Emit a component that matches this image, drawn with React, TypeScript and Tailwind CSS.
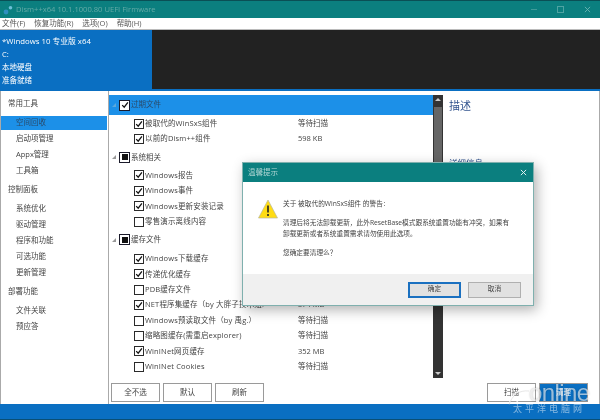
import React from 'react';

const font = { fontFamily: '"Open Sans", "Noto Sans CJK SC", sans-serif' };

const nav = [
  { title: '常用工具', items: ['空间回收', '启动项管理', 'Appx管理', '工具箱'] },
  { title: '控制面板', items: ['系统优化', '驱动管理', '程序和功能', '可选功能', '更新管理'] },
  { title: '部署功能', items: ['文件关联', '预应答'] },
];

const groups = [
  {
    name: '过期文件',
    state: 'on',
    active: true,
    pad: 'pt-[1px]',
    rows: [
      ['被取代的WinSxS组件', true, '等待扫描'],
      ['以前的Dism++组件', true, '598 KB'],
    ],
  },
  {
    name: '系统相关',
    state: 'mixed',
    pad: 'pt-[1px]',
    rows: [
      ['Windows报告', true, ''],
      ['Windows事件', true, ''],
      ['Windows更新安装记录', true, ''],
      ['零售演示离线内容', false, ''],
    ],
  },
  {
    name: '缓存文件',
    state: 'mixed',
    pad: 'pt-[2px]',
    rows: [
      ['Windows下载缓存', true, ''],
      ['传递优化缓存', true, ''],
      ['PDB缓存文件', false, ''],
      ['NET程序集缓存（by 大胖子技术组）', true, '374 MB'],
      ['Windows预读取文件（by 禹g.）', false, '等待扫描'],
      ['缩略图缓存(需重启explorer)', false, '等待扫描'],
      ['WinINet网页缓存', true, '352 MB'],
      ['WinINet Cookies', false, '等待扫描'],
    ],
  },
];

function Check({ state, group }: { state: string; group?: boolean }) {
  return (
    <span
      className={`shrink-0 bg-white flex items-center justify-center ${
        group ? 'w-[11px] h-[11px] border-[1.5px] border-[#1a1a2a]' : 'w-[10px] h-[10px] border-[1.5px] border-[#2a2a2a]'
      }`}
    >
      {state === 'on' && (
        <svg viewBox="0 0 10 10" className="w-[8px] h-[8px]">
          <path d="M1.5 5.2 L4 7.8 L8.6 1.8" fill="none" stroke="#111" strokeWidth="1.6" />
        </svg>
      )}
      {state === 'mixed' && <span className="w-[6px] h-[6px] bg-[#111]" />}
    </span>
  );
}

function Btn({ label, cls }: { label: string; cls?: string }) {
  return (
    <div className={`w-[49px] h-[19px] border border-[#9a9a9a] flex items-center justify-center ${cls ?? 'bg-white text-[#444]'}`}>
      {label}
    </div>
  );
}

export default function App() {
  return (
    <div
      className="relative w-[600px] h-[420px] overflow-hidden bg-white flex flex-col text-[7.5px] leading-none text-[#444] blur-[0.4px]"
      style={font}
    >
      {/* title bar */}
      <div className="h-[18px] bg-[#0b7f7f] border-t border-[#0a4f55] flex items-center pl-[3px] text-[#63aaa6] text-[7.6px] shrink-0">
        <svg viewBox="0 0 10 10" className="w-[10px] h-[10px] mr-[3px]">
          <circle cx="3" cy="7" r="2.4" fill="#2f8fc0" />
          <circle cx="7.5" cy="2.8" r="1.8" fill="#6cc0d8" />
        </svg>
        <span>Dism++x64 10.1.1000.80 UEFI Firmware</span>
        <div className="ml-auto flex items-center gap-[20px] pr-[9px]">
          <span className="w-[6px] h-px bg-[#3f9a99]" />
          <span className="w-[7px] h-[7px] border border-[#4ea3a2]" />
          <svg viewBox="0 0 8 8" className="w-[7px] h-[7px]">
            <path d="M1 1 L7 7 M7 1 L1 7" stroke="#6cb5b3" strokeWidth="1" />
          </svg>
        </div>
      </div>

      {/* menu */}
      <div className="h-[12px] flex items-center pl-[2px] gap-[9px] text-[#555] shrink-0 border-b border-[#bbb]">
        <span>文件(F)</span>
        <span>恢复功能(R)</span>
        <span>选项(O)</span>
        <span>帮助(H)</span>
      </div>

      {/* session header */}
      <div className="h-[61px] flex bg-[#222] border-b-2 border-[#0a6fc2] shrink-0">
        <div className="w-[152px] bg-[#0a6fc2] text-white flex flex-col justify-around pl-[2px] pt-[5px] pb-[2px]">
          <span className="text-[7.8px]">*Windows 10 专业版 x64</span>
          <span>C:</span>
          <span>本地硬盘</span>
          <span>准备就绪</span>
        </div>
      </div>

      {/* body */}
      <div className="flex-1 flex min-h-0 border-l border-r border-[#aaa]">
        <div className="w-[108px] shrink-0 border-r border-[#aaa] pt-[5px]">
          {nav.map((g) => (
            <div key={g.title} className="mb-[3px]">
              <div className="h-[16px] pl-[7px] flex items-center">{g.title}</div>
              <div className="pt-[3px]">
                {g.items.map((it) => (
                  <div key={it} className="h-[16px] flex items-center">
                    <div className={`h-[14px] flex-1 pl-[15px] flex items-center ${it === '空间回收' ? 'bg-[#1c90e8] mr-[1px] text-[#2a4a6a]' : ''}`}>
                      {it}
                    </div>
                  </div>
                ))}
              </div>
            </div>
          ))}
        </div>

        <div className="flex-1 flex flex-col min-w-0 pt-[4px]">
          <div className="flex h-[283px]">
            <div className="w-[324px] shrink-0">
              {groups.map((g, i) => (
                <div key={g.name} className={i === 0 ? '' : 'mt-[1px]'}>
                  <div className={`flex items-center pl-[3px] ${g.active ? 'h-[20px] bg-[#1c90e8] text-[#2a4a6a]' : 'h-[19px]'}`}>
                    <svg viewBox="0 0 4 4" className="w-[4px] h-[4px] mr-[3px] shrink-0">
                      <path d="M4 0 V4 H0 Z" fill={g.active ? '#5aa8dc' : '#999'} />
                    </svg>
                    <Check state={g.state} group />
                    <span className="ml-[1px]">{g.name}</span>
                  </div>
                  <div className={g.pad}>
                    {g.rows.map((r) => (
                      <div key={r[0] as string} className="h-[15.4px] flex items-center pl-[25px]">
                        <Check state={r[1] ? 'on' : 'off'} />
                        <span className="ml-[1px] tracking-[0.15px] w-[153px] whitespace-nowrap">{r[0]}</span>
                        <span>{r[2]}</span>
                      </div>
                    ))}
                  </div>
                </div>
              ))}
            </div>
            <div className="w-[10px] shrink-0 bg-[#333] flex flex-col items-center py-[3px]">
              <span className="w-0 h-0 border-x-[3px] border-x-transparent border-b-[3px] border-b-[#ccc]" />
              <span className="w-[8px] h-[100px] mt-[6px] bg-[#666]" />
              <span className="mt-auto w-0 h-0 border-x-[3px] border-x-transparent border-t-[3px] border-t-[#ccc]" />
            </div>
            <div className="flex-1 pl-[6px] pt-[5px]">
              <div className="text-[11px] text-[#33558f]">描述</div>
              <div className="mt-[48px] text-[8.5px] text-[#33558f]">详细信息</div>
            </div>
          </div>
          <div className="flex items-center pl-[2px] pr-[11px] pt-[5px] gap-[3px]">
            <Btn label="全不选" />
            <Btn label="默认" />
            <Btn label="刷新" />
            <div className="ml-auto flex gap-[3px]">
              <Btn label="扫描" />
              <Btn label="清理" cls="bg-[#0a6fc2] border-[#0a6fc2] text-white" />
            </div>
          </div>
        </div>
      </div>

      {/* status bar */}
      <div className="h-[16px] bg-[#0a6fc2] shrink-0 border-b border-[#0a4f75]" />

      {/* warning dialog */}
      <div className="absolute left-[242px] top-[162px] w-[292px] h-[144px] bg-white border border-[#7fb0ae] shadow-[3px_4px_12px_rgba(0,0,0,0.3)] flex flex-col text-[6.7px] text-[#444]">
        <div className="h-[19px] bg-[#0b7f7f] shrink-0 flex items-center justify-between pl-[5px] pr-[6px] text-[#b5d8d6] text-[7.5px]">
          <span>温馨提示</span>
          <svg viewBox="0 0 8 8" className="w-[7px] h-[7px]">
            <path d="M1 1 L7 7 M7 1 L1 7" stroke="#e6f4f4" strokeWidth="1.1" />
          </svg>
        </div>
        <div className="flex-1 flex pl-[15px] pt-[17px]">
          <svg viewBox="0 0 20 20" className="w-[20px] h-[20px] shrink-0">
            <path d="M10 1 L19.5 19 L0.5 19 Z" fill="#ffdc14" stroke="#b8b8a0" strokeWidth="0.7" />
            <path d="M10 6.5 V13.5 M10 15 V17" stroke="#222" strokeWidth="1.6" />
          </svg>
          <div className="ml-[5px] pt-[2px]">
            <div className="h-[19px]">关于 被取代的WinSxS组件 的警告：</div>
            <div className="h-[10.5px] whitespace-nowrap">清理后将无法卸载更新，此外ResetBase模式跟系统重置功能有冲突，如果有</div>
            <div className="h-[19px]">卸载更新或者系统重置需求请勿使用此选项。</div>
            <div>您确定要清理么？</div>
          </div>
        </div>
        <div className="h-[31px] bg-[#f0f0f0] shrink-0 flex items-center justify-end gap-[7px] pr-[12px]">
          <div className="w-[53px] h-[16px] bg-[#e1e1e1] border-2 border-[#1a70c0] flex items-center justify-center">确定</div>
          <div className="w-[53px] h-[16px] bg-[#e1e1e1] border border-[#b0b0b0] flex items-center justify-center">取消</div>
        </div>
      </div>

      {/* watermark */}
      <svg viewBox="0 0 24 20" className="absolute left-[507px] top-[386px] w-[24px] h-[20px]">
        <path d="M2 18 C5 8 12 3 22 4 M9 18 C11 12 16 10 21 11" fill="none" stroke="#fff" strokeOpacity="0.75" strokeWidth="1.5" />
        <path d="M2 19 C5 9 12 4 22 5" fill="none" stroke="#999" strokeOpacity="0.35" strokeWidth="0.7" />
      </svg>
      <div
        className="absolute left-[529px] top-[381px] text-[24px] text-white/60 tracking-[-0.6px] [text-shadow:0_0_2px_rgba(0,0,0,0.25)]"
        style={{ fontFamily: '"Liberation Sans", sans-serif' }}
      >
        online
      </div>
      <div className="absolute left-[513px] top-[404px] text-[9px] text-white/50 tracking-[3px] whitespace-nowrap">太平洋电脑网</div>
    </div>
  );
}
